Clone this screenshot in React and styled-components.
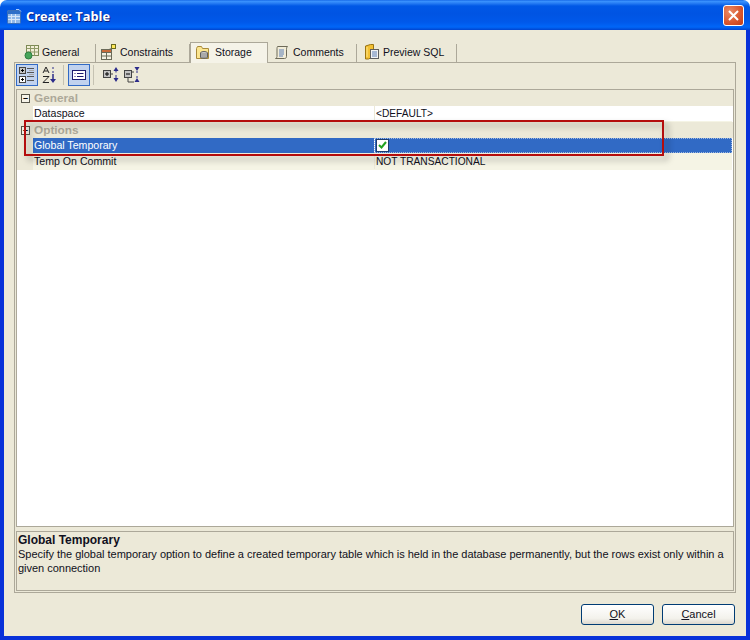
import styled, { createGlobalStyle } from "styled-components";

const GlobalStyle = createGlobalStyle`
  html, body {
    margin: 0;
    padding: 0;
    background: #fff;
  }
  * {
    box-sizing: border-box;
  }
`;

const TABS = [
  { label: "General", icon: <GeneralIcon />, width: 82, pad: 10, gap: 2 },
  { label: "Constraints", icon: <ConstraintsIcon />, width: 94, pad: 4, gap: 3 },
  { label: "Storage", icon: <StorageIcon />, width: 78, pad: 5, gap: 4, active: true },
  { label: "Comments", icon: <CommentsIcon />, width: 89, pad: 6, gap: 4 },
  { label: "Preview SQL", icon: <PreviewIcon />, width: 100, pad: 7, gap: 4 },
];

const ROWS = [
  { type: "group", label: "General" },
  { label: "Dataspace", value: "<DEFAULT>" },
  { type: "group", label: "Options" },
  { label: "Global Temporary", check: true, selected: true },
  { label: "Temp On Commit", value: "NOT TRANSACTIONAL", tinted: true },
];

function TableIcon() {
  return (
    <svg width="15" height="16" viewBox="0 0 15 16">
      <rect x="0.5" y="2.5" width="13" height="13" rx="1" fill="#8fb8ea" stroke="#3a6fb8" />
      <rect x="1" y="3" width="12" height="3" fill="#2f6fc8" />
      <path d="M1 8.500h12M1 11.500h12M4.500 6v9M8.500 6v9" stroke="#d7e6f8" />
      <path d="M9 1.500h3l2 2" stroke="#a8ccff" fill="none" />
    </svg>
  );
}

function GeneralIcon() {
  return (
    <svg width="16" height="16" viewBox="0 0 16 16">
      <rect x="2.5" y="1.5" width="12" height="10" fill="#f3efd8" stroke="#7d8a55" />
      <path d="M2.5 4.5h12M2.5 8h12M6.5 1.5v10M10.5 1.5v10" stroke="#8f9a68" />
      <circle cx="4.5" cy="11.5" r="3.5" fill="#47a55a" stroke="#2f7d40" />
    </svg>
  );
}

function ConstraintsIcon() {
  return (
    <svg width="17" height="17" viewBox="0 0 17 17">
      <rect x="1.5" y="5.5" width="10" height="10" fill="#f4f1e2" stroke="#6a6a58" />
      <rect x="1.5" y="5.5" width="10" height="3" fill="#c96b3a" stroke="#6a6a58" />
      <path d="M1.5 12h10M6.5 8v8" stroke="#6a6a58" />
      <rect x="11.5" y="0.5" width="4" height="4" fill="#ffe95a" stroke="#6a6a20" />
      <path d="M9 5.5L11.5 4.5" stroke="#6a6a58" />
    </svg>
  );
}

function StorageIcon() {
  return (
    <svg width="15" height="15" viewBox="0 0 15 15">
      <path d="M0.5 3.5l1-2h4l1 2h6v10h-12z" fill="#fbe58f" stroke="#a98a3a" />
      <ellipse cx="8" cy="8" rx="3.5" ry="1.5" fill="#cfcfcf" stroke="#5f5f5f" />
      <path d="M4.5 8v4.5c0 1 7 1 7 0V8" fill="#a9a9a9" stroke="#5f5f5f" />
    </svg>
  );
}

function CommentsIcon() {
  return (
    <svg width="15" height="15" viewBox="0 0 15 15">
      <path d="M3.5 1.500h10c-1 1-1 2-1 3v7c0 1.500-1 2-2 2h-9c1-.5 1.500-1 1.500-2v-8c0-1 .5-2 .5-2z" fill="#f1ecd8" stroke="#6d6a58" />
      <path d="M5 5h5M5 7h5M5 9h5M5 11h4" stroke="#5c7fb5" />
    </svg>
  );
}

function PreviewIcon() {
  return (
    <svg width="15" height="16" viewBox="0 0 15 16">
      <path d="M1.500 2l5-1.500h3v12l-5 2.500h-3z" fill="#f2c033" stroke="#9a7412" />
      <path d="M3 3v10" stroke="#ffe68a" />
      <rect x="6.500" y="5.500" width="8" height="9" fill="#f3f3f3" stroke="#5f5f5f" />
      <path d="M8 8h5M8 10h5M8 12h5" stroke="#5c7fb5" />
    </svg>
  );
}

function CategorizedIcon() {
  return (
    <svg width="16" height="16" viewBox="0 0 16 16">
      <rect x="0.500" y="0.500" width="6" height="6" fill="#c4c4c4" stroke="#444" />
      <path d="M2 3.500h3M3.500 2v3" stroke="#000" />
      <rect x="0.500" y="9.500" width="6" height="6" fill="#fff" stroke="#444" />
      <path d="M2 12.500h3M3.500 11v3" stroke="#000" />
      <path d="M8 1.500h7M8 5.500h7M8 9.500h7M8 13.500h7" stroke="#555" />
      <path d="M10 3.500h5M10 7.500h5" stroke="#aaa" />
    </svg>
  );
}

function SortIcon() {
  return (
    <svg width="14" height="18" viewBox="0 0 14 18">
      <path d="M1 7l3-6 3 6M2.200 5h3.600" stroke="#222" fill="none" />
      <path d="M1 10.500h6L1 16.500h6" stroke="#222" fill="none" />
      <path d="M11 1v2M11 5v2" stroke="#2b2b8a" />
      <path d="M11 8v6" stroke="#2b2b8a" strokeWidth="1.500" />
      <path d="M8 13h6l-3 4z" fill="#2b2b8a" />
    </svg>
  );
}

function DescriptionIcon() {
  return (
    <svg width="14" height="10" viewBox="0 0 14 10">
      <rect x="0.500" y="0.500" width="13" height="9" fill="#fff" stroke="#1c1c70" />
      <path d="M2.500 3.500h1M5 3.500h6.500M2.500 6.500h1M5 6.500h6.500" stroke="#1c1c70" />
    </svg>
  );
}

function ExpandAllIcon() {
  return (
    <svg width="16" height="18" viewBox="0 0 16 18">
      <rect x="0.500" y="4.500" width="7" height="7" fill="#c4c4c4" stroke="#444" />
      <path d="M2 8h4M4 6v4" stroke="#000" />
      <path d="M8 8h2" stroke="#444" />
      <path d="M10.500 5l2.500-4 2.500 4zM10.500 12l2.500 4 2.500-4z" fill="#2b2b8a" />
      <path d="M13 5v1.500M13 9v3" stroke="#2b2b8a" />
    </svg>
  );
}

function CollapseAllIcon() {
  return (
    <svg width="16" height="18" viewBox="0 0 16 18">
      <rect x="0.500" y="4.500" width="7" height="7" fill="#c4c4c4" stroke="#444" />
      <path d="M2 8h4" stroke="#000" />
      <path d="M4 11.500v4.500h6M8 6h2" stroke="#444" fill="none" />
      <path d="M10.500 1l2.500 4 2.500-4zM10.500 16l2.500-4 2.500 4z" fill="#2b2b8a" />
      <path d="M13 5v2M13 10v2" stroke="#2b2b8a" />
    </svg>
  );
}

export default function App() {
  return (
    <>
      <GlobalStyle />
      <Frame>
        <TitleBar>
          <TableIcon />
          <Title>Create: Table</Title>
          <CloseButton aria-label="Close">
            <svg width="11" height="11" viewBox="0 0 11 11">
              <path d="M1 1l9 9M10 1l-9 9" stroke="#fff" strokeWidth="2" />
            </svg>
          </CloseButton>
        </TitleBar>

        <Client>
          <TabStrip>
            {TABS.map((tab) => (
              <Tab key={tab.label} $active={tab.active} $width={tab.width} $pad={tab.pad} $gap={tab.gap}>
                {tab.icon}
                {tab.label}
              </Tab>
            ))}
          </TabStrip>

          <Pane>
            <Toolbar>
              <ToolButton $active>
                <CategorizedIcon />
              </ToolButton>
              <ToolButton>
                <SortIcon />
              </ToolButton>
              <ToolSeparator />
              <ToolButton $active>
                <DescriptionIcon />
              </ToolButton>
              <ToolSeparator $after={6} />
              <ToolButton $width={21}>
                <ExpandAllIcon />
              </ToolButton>
              <ToolButton>
                <CollapseAllIcon />
              </ToolButton>
            </Toolbar>

            <Sheet>
              {ROWS.map((row) =>
                row.type === "group" ? (
                  <GroupRow key={row.label}>
                    <Toggle>–</Toggle>
                    {row.label}
                  </GroupRow>
                ) : (
                  <Row key={row.label}>
                    <Gutter />
                    <LabelCell $selected={row.selected} $tinted={row.tinted}>
                      {row.label}
                    </LabelCell>
                    <ValueCell $selected={row.selected} $tinted={row.tinted}>
                      {row.check ? (
                        <CheckBox>
                          <svg width="9" height="8" viewBox="0 0 9 8">
                            <path d="M1 4l2.500 2.500L8 1" stroke="#21a121" strokeWidth="2" fill="none" />
                          </svg>
                        </CheckBox>
                      ) : (
                        row.value
                      )}
                    </ValueCell>
                  </Row>
                )
              )}
              <Highlight />
            </Sheet>

            <HelpPanel>
              <HelpTitle>Global Temporary</HelpTitle>
              <HelpText>
                Specify the global temporary option to define a created temporary table which is
                held in the database permanently, but the rows exist only within a given connection
              </HelpText>
            </HelpPanel>
          </Pane>

          <ButtonRow>
            <DialogButton>
              <u>O</u>K
            </DialogButton>
            <DialogButton>
              <u>C</u>ancel
            </DialogButton>
          </ButtonRow>
        </Client>
      </Frame>
    </>
  );
}

const Frame = styled.div`
  width: 750px;
  height: 640px;
  display: flex;
  flex-direction: column;
  overflow: hidden;
  border-radius: 7px 7px 0 0;
  font-family: "Liberation Sans", Arial, sans-serif;
  font-size: 11px;
  color: #101020;
`;

const TitleBar = styled.div`
  height: 30px;
  flex: none;
  display: flex;
  align-items: center;
  gap: 4px;
  padding: 2px 6px 0 7px;
  background: linear-gradient(
    to bottom,
    #0a5be0 0,
    #3d95ff 1px,
    #2a80f5 3px,
    #0058e6 6px,
    #0054e3 14px,
    #0058ea 22px,
    #0066f8 27px,
    #0050dd 29px,
    #0043cf 30px
  );
`;

const Title = styled.span`
  flex: 1;
  font-family: "Open Sans", sans-serif;
  font-size: 12.8px;
  font-weight: 700;
  color: #fff;
  text-shadow: 1px 1px 0 #0f1f80;
`;

const CloseButton = styled.button`
  width: 21px;
  height: 21px;
  margin-top: -1px;
  padding: 0;
  display: flex;
  align-items: center;
  justify-content: center;
  border: 1px solid #fff;
  border-radius: 3px;
  background: radial-gradient(circle at 30% 30%, #e98a66, #d8552c 60%, #c23c17);
`;

const Client = styled.div`
  flex: 1;
  display: flex;
  flex-direction: column;
  padding: 12px 10px 11px;
  background: #ece9d8;
  border-left: 4px solid #0831d9;
  border-right: 4px solid #0831d9;
  border-bottom: 4px solid #0831d9;
`;

const TabStrip = styled.div`
  height: 20px;
  flex: none;
  display: flex;
  align-items: flex-end;
`;

const Tab = styled.div`
  width: ${(p) => p.$width}px;
  height: ${(p) => (p.$active ? 21 : 18)}px;
  display: flex;
  align-items: center;
  gap: ${(p) => p.$gap}px;
  padding: 0 0 2px ${(p) => p.$pad}px;
  margin-bottom: ${(p) => (p.$active ? -1 : 0)}px;
  position: relative;
  font-size: 10.5px;
  background: ${(p) => (p.$active ? "#f5f3e8" : "transparent")};
  border-right: 1px solid #aca899;
  border-left: ${(p) => (p.$active ? "1px solid #aca899" : "0")};
  border-top: ${(p) => (p.$active ? "1px solid #aca899" : "0")};
`;

const Pane = styled.div`
  flex: 1;
  min-height: 0;
  display: flex;
  flex-direction: column;
  padding: 0 1px 1px;
  border: 1px solid #aca899;
`;

const Toolbar = styled.div`
  height: 26px;
  flex: none;
  display: flex;
  align-items: flex-start;
  padding-top: 1px;
`;

const ToolButton = styled.div`
  width: ${(p) => p.$width || 22}px;
  height: 22px;
  display: flex;
  align-items: center;
  justify-content: center;
  background: ${(p) => (p.$active ? "#c1d2ee" : "transparent")};
  border: 1px solid ${(p) => (p.$active ? "#316ac5" : "transparent")};
`;

const ToolSeparator = styled.div`
  width: 1px;
  height: 20px;
  margin: 1px ${(p) => p.$after || 4}px 0 3px;
  background: #c5c2b2;
`;

const Sheet = styled.div`
  flex: 1;
  min-height: 0;
  position: relative;
  background: #fff;
  border: 1px solid #aca899;
`;

const GroupRow = styled.div`
  height: 16px;
  display: flex;
  align-items: center;
  gap: 4px;
  padding-left: 4px;
  background: #ece9d8;
  font-size: 11.8px;
  font-weight: 700;
  color: #aca899;
`;

const Toggle = styled.span`
  width: 9px;
  height: 9px;
  display: flex;
  align-items: center;
  justify-content: center;
  background: #f5f3e8;
  border: 1px solid #55554a;
  font-size: 9px;
  line-height: 1;
  color: #000;
`;

const Row = styled.div`
  height: 16px;
  display: flex;
  margin-right: 1px;
  background: #f5f4e5;
`;

const Gutter = styled.div`
  width: 16px;
  flex: none;
  background: #ece9d8;
`;

const cellBackground = (p) => (p.$selected ? "#316ac5" : p.$tinted ? "#f5f4e5" : "#fff");

const LabelCell = styled.div`
  width: 341px;
  height: 15px;
  flex: none;
  display: flex;
  align-items: center;
  padding: 0 0 1px 1px;
  font-size: 10.6px;
  background: ${cellBackground};
  color: ${(p) => (p.$selected ? "#fff" : "inherit")};
`;

const ValueCell = styled.div`
  flex: 1;
  height: 15px;
  display: flex;
  align-items: center;
  padding: 0 0 1px 1px;
  font-size: 10.2px;
  background: ${cellBackground};
  border-left: 1px solid ${(p) => (p.$selected ? "#fff" : "#ece9d8")};
  outline: ${(p) => (p.$selected ? "1px dotted #9fb8e0" : "none")};
  outline-offset: -1px;
`;

const CheckBox = styled.span`
  width: 13px;
  height: 13px;
  display: flex;
  align-items: center;
  justify-content: center;
  background: #fff;
  border: 1px solid #1e3c6e;
`;

const Highlight = styled.div`
  position: absolute;
  left: 7px;
  top: 30px;
  width: 640px;
  height: 36px;
  border: 2px solid #b40d0d;
  filter: drop-shadow(4px 4px 3px rgba(0, 0, 0, 0.35));
  pointer-events: none;
`;

const HelpPanel = styled.div`
  height: 60px;
  flex: none;
  margin-top: 4px;
  padding: 1px;
  border: 1px solid #aca899;
`;

const HelpTitle = styled.div`
  height: 14px;
  font-size: 12px;
  font-weight: 700;
  line-height: 14px;
`;

const HelpText = styled.div`
  letter-spacing: -0.02px;
  line-height: 14px;
`;

const ButtonRow = styled.div`
  height: 21px;
  flex: none;
  margin-top: 11px;
  padding-right: 1px;
  display: flex;
  justify-content: flex-end;
  gap: 8px;
`;

const DialogButton = styled.button`
  width: 73px;
  height: 21px;
  padding: 0 0 1px;
  border: 1px solid #003c74;
  border-radius: 3px;
  background: linear-gradient(to bottom, #ffffff, #f3f2ec 70%, #dcd8ce);
  font-family: "Liberation Sans", Arial, sans-serif;
  font-size: 11px;
  color: #101020;
`;
